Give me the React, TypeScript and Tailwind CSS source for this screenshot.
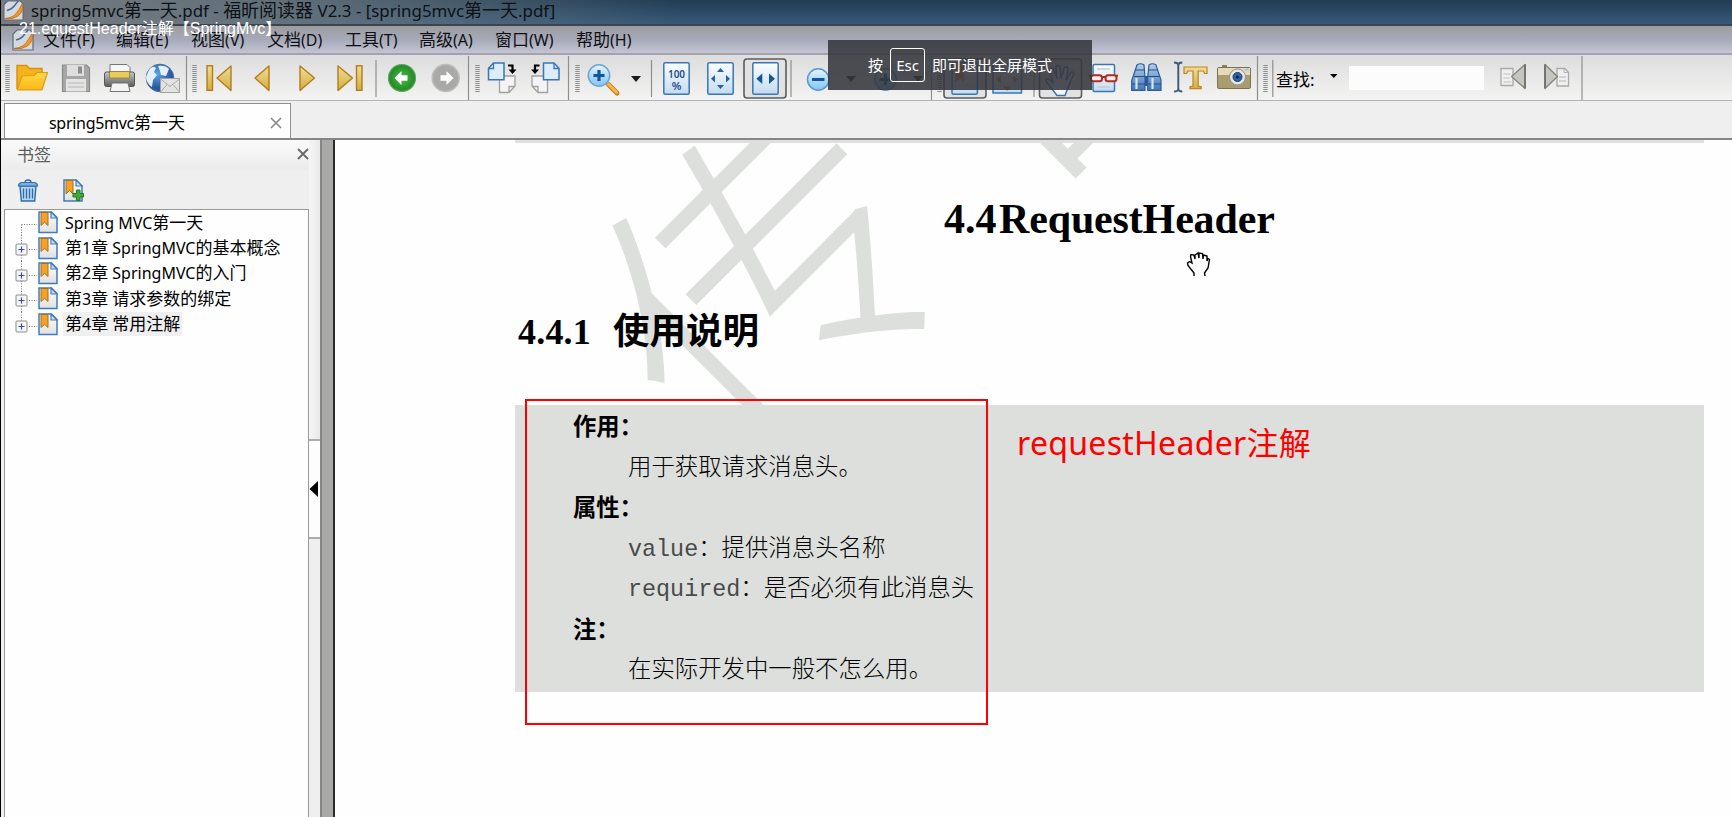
import React from "react";

const UI = "font-['Noto_Sans','Noto_Sans_CJK_SC',sans-serif]";

/** Splits mixed text so that the Latin runs can be set slightly smaller than the Chinese ones. */
function Mixed({ text, latin }: { text: string; latin: string }) {
  const parts = text.split(/([\x20-\x7e]+)/).filter(Boolean);
  return (
    <>
      {parts.map((p, i) =>
        /^[\x20-\x7e]+$/.test(p) ? (
          <span key={i} className={latin}>
            {p}
          </span>
        ) : (
          <span key={i}>{p}</span>
        ),
      )}
    </>
  );
}

/** A toolbar cell; its drawing uses the window's own coordinates. */
function Slot({ x, to, children }: { x: number; to: number; children?: React.ReactNode }) {
  return (
    <svg className="block shrink-0" width={to - x} height={45} viewBox={`${x} 55 ${to - x} 45`}>
      {children}
    </svg>
  );
}

function Grip({ x }: { x: number }) {
  return (
    <line x1={x + 2.5} x2={x + 2.5} y1="65" y2="92" stroke="#8d8d8d" strokeWidth="4.4" strokeDasharray="1 1" />
  );
}

function Divider({ x, short }: { x: number; short?: boolean }) {
  return <line x1={x} x2={x} y1={short ? 60 : 56} y2={short ? 97 : 100} stroke="#8f8f8f" strokeWidth="1.2" />;
}

function Caret({ x, y = 76 }: { x: number; y?: number }) {
  return <path d={`M${x} ${y}h10l-5 6z`} fill="#1c1c1c" />;
}

function Pressed({ x }: { x: number }) {
  return <rect x={x} y="59" width="42" height="39" rx="3" fill="#e2e2e2" stroke="#5c5c5c" strokeWidth="1.6" />;
}

function Sheet({ x }: { x: number }) {
  return <rect x={x} y="62.8" width="25.4" height="31.4" rx="1.5" fill="url(#sheet)" stroke="#3a76b4" strokeWidth="1.5" />;
}

function Defs() {
  return (
    <svg width="0" height="0" className="absolute">
      <defs>
        <linearGradient id="sheet" x1="0" y1="0" x2="0" y2="1">
          <stop offset="0" stopColor="#fafdff" />
          <stop offset="1" stopColor="#c3dcf0" />
        </linearGradient>
        <linearGradient id="gold" x1="0" y1="0" x2="0" y2="1">
          <stop offset="0" stopColor="#f0dc94" />
          <stop offset="1" stopColor="#d3ae3f" />
        </linearGradient>
        <linearGradient id="folder" x1="0" y1="0" x2="0" y2="1">
          <stop offset="0" stopColor="#ffd84a" />
          <stop offset="1" stopColor="#fdb813" />
        </linearGradient>
        <linearGradient id="steel" x1="0" y1="0" x2="0" y2="1">
          <stop offset="0" stopColor="#c9c9c9" />
          <stop offset="1" stopColor="#5a5a5a" />
        </linearGradient>
        <linearGradient id="blue" x1="0" y1="0" x2="0" y2="1">
          <stop offset="0" stopColor="#b4d0ee" />
          <stop offset="1" stopColor="#3f74b4" />
        </linearGradient>
        <linearGradient id="glass" x1="0" y1="0" x2="0" y2="1">
          <stop offset="0" stopColor="#e4f4ff" />
          <stop offset="1" stopColor="#7fc5f2" />
        </linearGradient>
        <linearGradient id="paper" x1="0" y1="0" x2="0" y2="1">
          <stop offset="0" stopColor="#ffffff" />
          <stop offset="1" stopColor="#dfdfdf" />
        </linearGradient>
        <radialGradient id="green">
          <stop offset="0" stopColor="#4db848" />
          <stop offset="1" stopColor="#1f8a25" />
        </radialGradient>
        <radialGradient id="globe" cx="0.4" cy="0.35">
          <stop offset="0" stopColor="#58a4e6" />
          <stop offset="1" stopColor="#2a5a9c" />
        </radialGradient>
      </defs>
    </svg>
  );
}

function Toolbar() {
  return (
    <div className="flex h-[46px] shrink-0 border-b border-[#b3b3b3] bg-linear-to-b from-[#dcdddc] to-[#f3f3f2]">
      <Slot x={1} to={12}><Grip x={5} /></Slot>
      <Slot x={12} to={55}>
        <path d="M17 89V65.500h9.500l3 3h12.500v6" fill="#f3b21e" stroke="#d98e0c" strokeWidth="1.400" />
        <path d="M17.300 89.800L22 76l12-.500 3-3h10.500L42 89.800z" fill="url(#folder)" stroke="#e09a12" strokeWidth="1.200" strokeLinejoin="round" />
      </Slot>
      <Slot x={55} to={97}>
        <path d="M62.500 65h24l3 3v23.500h-27z" fill="#a6a6a6" stroke="#8b8b8b" strokeWidth="1.200" />
        <rect x="67" y="65" width="17" height="11" fill="#dedede" />
        <rect x="78" y="66.500" width="4" height="7" fill="#8d8d8d" />
        <rect x="66" y="79" width="20" height="12.500" fill="#e4e4e4" />
        <path d="M68 83h16M68 87h16" stroke="#b5b5b5" />
      </Slot>
      <Slot x={97} to={141}>
        <path d="M110 64.500h17l3 3v8h-20z" fill="#f7f7f7" stroke="#777" />
        <rect x="104.500" y="72" width="30" height="14.500" rx="2" fill="url(#steel)" stroke="#555" />
        <rect x="109.500" y="71.500" width="20" height="6.500" fill="#e9cc5c" stroke="#8b7a3a" strokeWidth=".8" />
        <path d="M112 83h16l2 8.500h-20z" fill="#f3f3f3" stroke="#777" />
      </Slot>
      <Slot x={141} to={183}>
        <circle cx="160" cy="78" r="13.800" fill="url(#globe)" stroke="#4c6ea3" strokeWidth="1" />
        <path d="M149 70c3-4 5-4 7-2l-2 4 3 3-4 5-1 7c-3-2-6-6-6-10zM158 66c4-1 9 0 11 3l-3 7-5-1-1-4z" fill="#e4eff9" />
        <rect x="160.500" y="78.500" width="19" height="14" fill="#e3e3e3" stroke="#a0a0a0" />
        <path d="M160.500 79l9.500 7.500 9.500-7.500M160.500 92l6.500-7.500M179.500 92l-6.500-7.500" fill="none" stroke="#aaa" />
      </Slot>
      <Slot x={183} to={200}><Divider x={186.500} /><Grip x={192} /></Slot>
      <Slot x={200} to={243}>
        <rect x="207" y="65.800" width="5.500" height="24.500" fill="url(#gold)" stroke="#b27c1d" strokeWidth="1.400" />
        <path d="M231 66v24.500L217 78z" fill="url(#gold)" stroke="#b27c1d" strokeWidth="1.400" strokeLinejoin="round" />
      </Slot>
      <Slot x={243} to={285}>
        <path d="M269 66v24.500L255 78z" fill="url(#gold)" stroke="#b27c1d" strokeWidth="1.400" strokeLinejoin="round" />
      </Slot>
      <Slot x={285} to={328}>
        <path d="M300 66v24.500L314.500 78z" fill="url(#gold)" stroke="#b27c1d" strokeWidth="1.400" strokeLinejoin="round" />
      </Slot>
      <Slot x={328} to={372}>
        <path d="M338 66v24.500L352.500 78z" fill="url(#gold)" stroke="#b27c1d" strokeWidth="1.400" strokeLinejoin="round" />
        <rect x="356.500" y="65.800" width="5.500" height="24.500" fill="url(#gold)" stroke="#b27c1d" strokeWidth="1.400" />
      </Slot>
      <Slot x={372} to={424}>
        <Divider x={376} short />
        <circle cx="402" cy="78" r="13.500" fill="url(#green)" stroke="#64a562" strokeWidth="1.200" />
        <path d="M394.500 78l7-7v4.200h6v5.600h-6v4.200z" fill="#fff" />
      </Slot>
      <Slot x={424} to={465}>
        <circle cx="445.700" cy="78" r="13.500" fill="#a9aaa8" stroke="#bdbdbb" strokeWidth="1.500" />
        <path d="M453.500 78l-7-7v4.200h-6v5.600h6v4.200z" fill="#fff" />
      </Slot>
      <Slot x={465} to={483}><Divider x={468.500} /><Grip x={475} /></Slot>
      <Slot x={483} to={524}>
        <path d="M499.500 76h15.500v10l-6 6.500h-9.500z" fill="#f4f4f4" stroke="#a0a0a0" strokeWidth="1.300" />
        <path d="M509 92.500v-6h6" fill="none" stroke="#a0a0a0" strokeWidth="1.300" />
        <path d="M493.500 63h10.500v16.800h-15.500v-11.500z" fill="#dcecf8" stroke="#3a76b4" strokeWidth="1.500" />
        <path d="M493.500 63v5.500h-5" fill="none" stroke="#3a76b4" strokeWidth="1.300" />
        <path d="M508 65.500h4.500v5" fill="none" stroke="#000" strokeWidth="2.200" />
        <path d="M508.500 69.500h8l-4 4.500z" />
      </Slot>
      <Slot x={524} to={565}>
        <path d="M547.500 76h-15.500v10l6 6.500h9.500z" fill="#f4f4f4" stroke="#a0a0a0" strokeWidth="1.300" />
        <path d="M538 92.500v-6h-6" fill="none" stroke="#a0a0a0" strokeWidth="1.300" />
        <path d="M554 63h-10.500v16.800h15.500v-11.500z" fill="#dcecf8" stroke="#3a76b4" strokeWidth="1.500" />
        <path d="M554 63v5.500h5" fill="none" stroke="#3a76b4" strokeWidth="1.300" />
        <path d="M539.500 65.500h-4.500v5" fill="none" stroke="#000" strokeWidth="2.200" />
        <path d="M539 69.500h-8l4 4.500z" />
      </Slot>
      <Slot x={565} to={583}><Divider x={568.500} /><Grip x={575} /></Slot>
      <Slot x={583} to={624}>
        <path d="M608.500 84.500l8.500 8.500" stroke="#c8801a" strokeWidth="5" strokeLinecap="round" />
        <path d="M608.500 84.200l8 8" stroke="#f3b64c" strokeWidth="3" strokeLinecap="round" />
        <circle cx="599" cy="75.500" r="10.700" fill="url(#glass)" stroke="#6fa3d2" strokeWidth="1.500" />
        <path d="M599 70v11M593.500 75.500h11" stroke="#14559c" strokeWidth="3.200" />
      </Slot>
      <Slot x={624} to={656}><Caret x={631} /><Divider x={651.500} short /></Slot>
      <Slot x={656} to={698}>
        <Sheet x={663.800} />
        <text x="676.500" y="77.500" textAnchor="middle" fontSize="10" fontFamily="Noto Sans, sans-serif" fontWeight="600" fill="#1d4e8a">100</text>
        <text x="676.500" y="89.500" textAnchor="middle" fontSize="11" fontFamily="Noto Sans, sans-serif" fontWeight="600" fill="#1d4e8a">%</text>
      </Slot>
      <Slot x={698} to={741}>
        <Sheet x={707.800} />
        <path d="M717 72l3.500-4 3.500 4zM717 85l3.500 4 3.500-4zM715 75l-4 3.700 4 3.700zM726 75l4 3.700-4 3.700z" fill="#2261a5" />
      </Slot>
      <Slot x={741} to={788}>
        <Pressed x={744} />
        <Sheet x={752.800} />
        <path d="M762.300 73.500v10.500l-6-5.200zM769 73.500v10.500l6-5.200z" fill="#14559c" />
      </Slot>
      <Slot x={788} to={836}>
        <Divider x={791} short />
        <circle cx="818.200" cy="79.500" r="10.700" fill="url(#glass)" stroke="#5c97ca" strokeWidth="1.500" />
        <path d="M812 79.500h12.500" stroke="#14559c" strokeWidth="3" />
      </Slot>
      <Slot x={836} to={868}><Caret x={846} /></Slot>
      <Slot x={868} to={905}>
        <circle cx="885.500" cy="79.500" r="10.700" fill="url(#glass)" stroke="#5c97ca" strokeWidth="1.500" />
        <path d="M879.500 79.500h12M885.500 73.500v12" stroke="#14559c" strokeWidth="3" />
      </Slot>
      <Slot x={905} to={942}><Caret x={913} /><Divider x={931.500} /><Grip x={937} /></Slot>
      <Slot x={942} to={988}>
        <Pressed x={944} />
        <Sheet x={952} />
        <path d="M955.500 63.500h8.500v19l-4.200-4-4.300 4z" fill="#e8962a" />
      </Slot>
      <Slot x={988} to={1036}>
        <rect x="993" y="64" width="28.500" height="29" fill="url(#sheet)" stroke="#3a76b4" strokeWidth="1.500" />
        <path d="M1001 75.500v8l-4.500-4zM1013.500 75.500v8l4.500-4zM1003 86.500h8l-4 4.500z" fill="#c98a20" />
        <Divider x={1034} short />
      </Slot>
      <Slot x={1036} to={1085}>
        <Pressed x={1039.500} />
        <path d="M1055 90l-7-9c-2-3-1-5 2-3l4 3-3-12c0-3 3-3 4 0l3 8-1-11c0-3 4-3 4 0l1 11 3-10c1-3 4-2 4 1l-2 11 4-7c2-3 5-1 3 2l-5 12-3 8h-8z" transform="translate(-1 1.500)" fill="#f2f7fc" stroke="#3a6ea8" strokeWidth="1.400" />
      </Slot>
      <Slot x={1085} to={1125}>
        <rect x="1093" y="64.500" width="21.500" height="27" rx="1.500" fill="url(#sheet)" stroke="#3a76b4" strokeWidth="1.500" />
        <path d="M1097 69h13M1097 87h13" stroke="#c3cdd6" strokeWidth="1.600" />
        <path d="M1089 75.500l3 .5M1118 75.500l-3 .5" stroke="#b12c20" strokeWidth="2" />
        <rect x="1091" y="75.300" width="11" height="6" rx="2.500" fill="#fbeceb" stroke="#b12c20" strokeWidth="2" />
        <rect x="1105.500" y="75.300" width="11" height="6" rx="2.500" fill="#fbeceb" stroke="#b12c20" strokeWidth="2" />
        <path d="M1102 77h3.500" stroke="#b12c20" strokeWidth="2" />
      </Slot>
      <Slot x={1125} to={1168}>
        <path d="M1142 76h9v10h-9z" fill="#2b5a9c" />
        <path d="M1137 65q3.500-2.500 7 0l1 12v13.500h-13.300v-10z" fill="url(#blue)" stroke="#2c5c9e" strokeWidth="1.200" />
        <path d="M1149 65q3.500-2.500 7 0l5 15v10.500h-13.300V77z" fill="url(#blue)" stroke="#2c5c9e" strokeWidth="1.200" />
        <path d="M1135.500 70h9M1134 76.500h11M1148.500 70h9M1148 76.500h11.500M1132 84h13M1148 84h13" stroke="#24508e" strokeWidth="1" />
        <path d="M1136.500 78v11M1152.500 78v11" stroke="#d5e6f7" strokeWidth="2.200" />
      </Slot>
      <Slot x={1168} to={1212}>
        <path d="M1174 62.500q4 0 4.300 2.500q.2-2.500 4-2.500M1174 91.500q4 0 4.300-2.500q.2 2.500 4 2.500M1178.300 64v26" fill="none" stroke="#3d5878" strokeWidth="1.900" />
        <path d="M1184 67h23v6.500h-2.500l-1-2.500h-5.300v15l3 .8v1.900h-11.200v-1.900l3-.8v-15h-5.300l-1 2.500h-2.700z" fill="url(#gold)" stroke="#bd8622" strokeWidth="1.200" />
      </Slot>
      <Slot x={1212} to={1254}>
        <rect x="1222" y="65" width="5" height="3" fill="#8b7f58" />
        <rect x="1217.500" y="67.500" width="33" height="21" rx="1.500" fill="#a99c6e" stroke="#7d724e" />
        <path d="M1218 68h32v7h-32z" fill="#e2dab8" />
        <circle cx="1237.500" cy="77" r="8" fill="#e6e6e6" stroke="#8f8f8f" />
        <circle cx="1237.500" cy="77" r="4.500" fill="#2d62a3" stroke="#1c3d6b" />
        <circle cx="1237.500" cy="77" r="1.600" fill="#0c1f3c" />
        <path d="M1243 70.500h5.500v-2.500z" fill="#8fc7f0" />
      </Slot>
      <Slot x={1254} to={1276}><Divider x={1257.500} /><Grip x={1263} /><Divider x={1272.800} short /></Slot>
      <div className={`flex w-[44px] shrink-0 items-center pt-[4px] text-[17px] leading-none text-black ${UI}`}>查找:</div>
      <Slot x={1320} to={1349}><path d="M1330 74h7.500l-3.700 4z" /></Slot>
      <div className="mt-[11px] h-[24px] w-[135px] shrink-0 bg-[#fcfcfc]" />
      <Slot x={1484} to={1535}>
        <path d="M1501 68.500h12v17h-12z" fill="#f0f0f0" stroke="#a9a9a9" strokeWidth="1.300" />
        <path d="M1503.500 74h7M1503.500 78h6M1503.500 82h8" stroke="#bdbdbd" />
        <path d="M1525 64.500v24L1511.500 76.500z" fill="#c5c4be" stroke="#85847f" strokeWidth="1.300" strokeLinejoin="round" />
        <path d="M1525 64.500v24" stroke="#6f6f6c" strokeWidth="1.800" />
      </Slot>
      <Slot x={1535} to={1576}>
        <path d="M1557 68.500h8l3.500 4v13.500h-11.500z" fill="#f0f0f0" stroke="#a9a9a9" strokeWidth="1.300" />
        <path d="M1564 68.500v4h4.500M1559 77h7M1559 81h7" fill="none" stroke="#b3b3b3" />
        <path d="M1545 64.500v24L1557.500 76.500z" fill="#c5c4be" stroke="#85847f" strokeWidth="1.300" strokeLinejoin="round" />
        <path d="M1545 64.500v24" stroke="#6f6f6c" strokeWidth="1.800" />
      </Slot>
      <Slot x={1576} to={1590}><Divider x={1582} /></Slot>
    </div>
  );
}

function AppIcon({ size }: { size: number }) {
  return (
    <svg width={size} height={size} viewBox="0 0 22 22" className="block shrink-0">
      <path d="M5 1h13l3 3v17H1V5z" fill="#d3d9df" stroke="#5f6b78" strokeWidth="1.200" />
      <path d="M4 11q5-1 8-5t4-5" fill="none" stroke="#4a6b90" strokeWidth="1.500" />
      <path d="M2 19.500q8-1 11.500-5T20 4q2 8-4 12.500T2 19.500z" fill="#f0982a" stroke="#c06a10" strokeWidth=".8" />
    </svg>
  );
}

const MENUS: [string, string][] = [
  ["文件(F)", "w-[73px]"],
  ["编辑(E)", "w-[75px]"],
  ["视图(V)", "w-[76px]"],
  ["文档(D)", "w-[78px]"],
  ["工具(T)", "w-[74px]"],
  ["高级(A)", "w-[76px]"],
  ["窗口(W)", "w-[81px]"],
  ["帮助(H)", "w-[80px]"],
];

function BookmarkIcon() {
  return (
    <svg width="20" height="23" viewBox="0 0 20 23" className="block shrink-0">
      <path d="M1 1h12.500l5.500 5.500v15H1z" fill="url(#paper)" stroke="#3f7cbb" strokeWidth="1.500" />
      <path d="M13 1v6h6z" fill="#cfe3f5" stroke="#3f7cbb" strokeWidth="1.200" />
      <path d="M3 1.500h7v13l-3.500-3.200L3 14.500z" fill="#f0a22c" stroke="#b36c12" strokeWidth="1" />
    </svg>
  );
}

const TREE: { text: string; child: boolean; on?: boolean }[] = [
  { text: "Spring MVC第一天", child: false },
  { text: "第1章 SpringMVC的基本概念", child: true },
  { text: "第2章 SpringMVC的入门", child: true },
  { text: "第3章 请求参数的绑定", child: true },
  { text: "第4章 常用注解", child: true, on: true },
];

function Sidebar() {
  return (
    <div className="flex w-[319px] shrink-0 bg-[#efefef]">
      <div className="flex w-[308px] shrink-0 flex-col">
        <div className={`flex h-[30px] items-center justify-between bg-linear-to-b from-[#fafafa] to-[#ececec] pl-[16px] text-[17px] text-[#5e5e5e] ${UI}`}>
          <span className="tracking-[0px]">书签</span>
          <svg width="12" height="12" viewBox="0 0 12 12" className="mb-[2px] block">
            <path d="M1 1l10 10M11 1L1 11" stroke="#6a6a6a" strokeWidth="1.900" />
          </svg>
        </div>
        <div className="flex h-[39px] items-start gap-[24px] pt-[9px] pl-[16px]">
          <svg width="22" height="23" viewBox="0 0 22 23" className="block">
            <path d="M3 7h16l-1.300 15H4.300z" fill="#b9d6ef" stroke="#2f6cad" strokeWidth="1.400" />
            <path d="M6.500 9.500v10M9.500 9.500v10M12.500 9.500v10M15.500 9.500v10" stroke="#2f6cad" strokeWidth="1.300" />
            <path d="M1.500 7q0-3.500 4-3.500h11q4 0 4 3.500z" fill="#7fb0dd" stroke="#2f6cad" strokeWidth="1.200" />
            <path d="M8 3.500q0-2.500 3-2.500t3 2.500" fill="none" stroke="#2f6cad" strokeWidth="1.400" />
          </svg>
          <svg width="21" height="23" viewBox="0 0 21 23" className="block">
            <path d="M1 1h12l6 6v15H1z" fill="url(#paper)" stroke="#3f7cbb" strokeWidth="1.500" />
            <path d="M13 1v6h6z" fill="#cfe3f5" stroke="#3f7cbb" strokeWidth="1.200" />
            <path d="M3 1.500h7v13.500l-3.500-3.500L3 15z" fill="#f0a22c" stroke="#b36c12" strokeWidth="1" />
            <path d="M13.500 11h3.500v3.500h3.500V18H17v3.500h-3.500V18H10v-3.500h3.500z" fill="#45a83a" stroke="#26791f" strokeWidth="1" />
          </svg>
        </div>
        <div className="ml-[3px] flex-1 border border-b-0 border-[#999] bg-[#fefefe]">
          {TREE.map((n, i) => (
            <div key={n.text} className="flex h-[25.400px] items-center">
              <svg width="33" height="25.400" viewBox="0 0 33 25.400" className="block shrink-0">
                <path
                  d={i === 0 ? "M16.500 14.500V26M16.500 14.500H32" : i === TREE.length - 1 ? "M16.500 0V9M24 14.500H32" : "M16.500 0V26M24 14.500H32"}
                  fill="none"
                  stroke="#777"
                  strokeWidth="1"
                  strokeDasharray="1 1.500"
                />
                {n.child && (
                  <>
                    <rect x="11" y="9" width="11" height="11" rx="1" fill="#f6f6f6" stroke="#8c8c8c" />
                    <path d="M13.500 14.500h6M16.500 11.500v6" stroke="#3a4f9c" strokeWidth="1.200" />
                  </>
                )}
              </svg>
              <BookmarkIcon />
              <span
                className={`ml-[5px] h-[24px] px-[2px] text-[17px] leading-[24px] whitespace-pre text-black ${UI} ${n.on ? "bg-[#efefef]" : ""}`}
              >
                <Mixed text={n.text} latin="text-[16px]" />
              </span>
            </div>
          ))}
        </div>
      </div>
      <div className="flex w-[11px] flex-col">
        <div className="h-[299px] bg-linear-to-r from-[#f6f6f6] to-[#e9e9e9]" />
        <div className="flex h-[100px] items-center border-y-2 border-[#ababab] bg-[#fdfdfd]">
          <svg width="10" height="16" viewBox="0 0 10 16" className="mb-0 block">
            <path d="M9 0v16L0.500 8z" />
          </svg>
        </div>
        <div className="flex-1 bg-[#efefef]" />
      </div>
    </div>
  );
}

const NOTES: { text: string; head?: boolean }[] = [
  { text: "作用：", head: true },
  { text: "用于获取请求消息头。" },
  { text: "属性：", head: true },
  { text: "value：提供消息头名称" },
  { text: "required：是否必须有此消息头" },
  { text: "注：", head: true },
  { text: "在实际开发中一般不怎么用。" },
];

function Page() {
  return (
    <div className="relative flex-1 overflow-hidden bg-[#fefefe] pl-[180px]">
      <div className="pointer-events-none absolute top-[-36px] left-[256px] h-[325px] w-[800px] origin-[162px_162px] -rotate-45 font-['Noto_Sans_CJK_SC',sans-serif] text-[325px] leading-[325px] font-light tracking-[60px] whitespace-nowrap text-[#dddfdc]">
        传智
      </div>
      <div className="relative flex flex-col">
        <div className="h-[3px] w-[1189px] bg-[#dfe0de]" />
        <h1 className="mt-[52px] ml-[429px] flex h-[48px] font-['Liberation_Serif',serif] text-[42px] leading-[48px] font-bold whitespace-nowrap text-black">
          <span className="w-[55px]">4.4</span>
          <span className="tracking-[-0.150px]">RequestHeader</span>
        </h1>
        <h2 className="mt-[63px] ml-[3px] flex h-[52px] items-center font-bold whitespace-nowrap text-black">
          <span className="w-[95px] font-['Liberation_Serif',serif] text-[36px] leading-none tracking-[0.200px]">4.4.1</span>
          <span className="mb-[5px] font-['Noto_Sans_CJK_SC',sans-serif] text-[36.500px] leading-none">使用说明</span>
        </h2>
        <div className="mt-[47px] flex h-[287px] w-[1189px] flex-col bg-[#dddfdc]">
          {NOTES.map((n) => (
            <div
              key={n.text}
              className={
                n.head
                  ? "h-[40.500px] pl-[58px] font-['Noto_Sans_CJK_SC',sans-serif] text-[23.300px] leading-[40.500px] font-bold whitespace-nowrap text-black"
                  : "h-[40.500px] pt-[3px] pl-[113px] font-['Liberation_Mono','Noto_Sans_CJK_SC',monospace] text-[23.400px] leading-[40.500px] font-light whitespace-nowrap text-black"
              }
            >
              <Mixed text={n.text} latin="text-[#4a4a4a]" />
            </div>
          ))}
        </div>
      </div>
      <div className="absolute top-[259px] left-[190px] h-[326px] w-[463px] border-2 border-[#fe0000]" />
      <div className="absolute top-[279px] left-[682px] font-['Noto_Sans','Noto_Sans_CJK_SC',sans-serif] text-[32px] leading-[48px] tracking-[0.300px] whitespace-nowrap text-[#fe0000]">
        requestHeader注解
      </div>
      <svg className="absolute top-[111px] left-[851px]" width="26" height="27" viewBox="0 0 26 27">
        <path
          d="M8 25v-3L2 14.500 1.500 12l2-1.500L6 12 4.500 5.500l.5-2 3 .5L9 8V4l3-2 1 5V2l3.500.5.500 5.500.5-4 3.500 1v5l1-2.500 1.500 1-1.500 8.500-3.500 5 .5 3"
          fill="#fff"
          stroke="#000"
          strokeWidth="1.400"
        />
      </svg>
    </div>
  );
}

function FullscreenHint() {
  return (
    <div className="absolute top-[40px] left-[827px] flex h-[50px] w-[264px] items-center bg-[#35373d]/88 pl-[40px] font-['Noto_Sans','Noto_Sans_CJK_SC',sans-serif] text-[15px] whitespace-nowrap text-white">
      <span>按</span>
      <span className="ml-[7px] flex h-[34px] w-[35px] items-center justify-center rounded-[3px] border border-white">Esc</span>
      <span className="ml-[7px]">即可退出全屏模式</span>
    </div>
  );
}

export default function App() {
  return (
    <div className="relative flex h-[817px] w-[1732px] flex-col overflow-hidden border-l border-black bg-[#efefef]">
      <Defs />
      <div className="h-[26px] shrink-0 border-b-2 border-[#3a4550] bg-linear-to-b from-[#213c53] to-[#37597a]">
        <div className={`flex h-full w-[680px] items-center bg-linear-to-r from-[#777c80] from-0% via-[#6c7880]/80 via-45% to-transparent pb-[3px] pl-[2px] text-[18px] text-[#0d1116] ${UI}`}>
          <AppIcon size={21} />
          <span className="ml-[7px] whitespace-pre">
            <Mixed text="spring5mvc第一天.pdf - 福昕阅读器 V2.3 - [spring5mvc第一天.pdf]" latin="text-[16.900px]" />
          </span>
        </div>
      </div>
      <div className={`flex h-[29px] shrink-0 items-center border-b-2 border-[#a2a2a8] bg-linear-to-b from-[#9c9c9f] via-[#a6aab8] to-[#c3c5d4] pl-[11px] text-[17px] text-[#101014] ${UI}`}>
        <AppIcon size={22} />
        <div className="ml-[9px] flex">
          {MENUS.map(([m, w]) => (
            <span key={m} className={`${w} shrink-0 whitespace-nowrap`}>
              <Mixed text={m} latin="text-[16px]" />
            </span>
          ))}
        </div>
      </div>
      <Toolbar />
      <div className="flex h-[39px] shrink-0 items-end border-b-2 border-[#858585] bg-[#efefef] pl-[3px]">
        <div className={`flex h-[35px] w-[287px] items-center justify-between border border-b-0 border-[#8f8f8f] bg-[#fefefe] pt-[3px] pr-[8px] pl-[44px] text-[17px] text-black ${UI}`}>
          <span className="whitespace-nowrap">
            <Mixed text="spring5mvc第一天" latin="text-[16px] tracking-[-0.300px]" />
          </span>
          <svg width="12" height="12" viewBox="0 0 12 12" className="block">
            <path d="M1 1l10 10M11 1L1 11" stroke="#8a8a8a" strokeWidth="1.700" />
          </svg>
        </div>
      </div>
      <div className="flex min-h-0 flex-1">
        <Sidebar />
        <div className="w-[15px] shrink-0 border-r-2 border-l-2 border-r-[#2b2b2b] border-l-[#868686] bg-[#a9a9a8]" />
        <Page />
      </div>
      <FullscreenHint />
      <div className="absolute top-[19px] left-[18px] font-['Liberation_Sans','Noto_Sans_CJK_SC',sans-serif] text-[16px] leading-[20px] whitespace-nowrap text-white">
        21.equestHeader注解【SpringMvc】
      </div>
    </div>
  );
}
